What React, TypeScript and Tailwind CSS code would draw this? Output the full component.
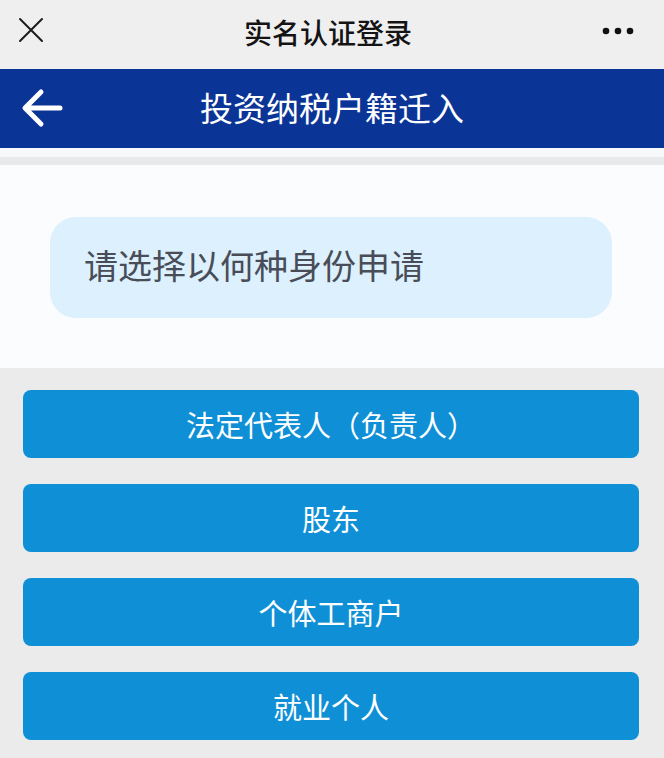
import React from 'react';

const options = ['法定代表人（负责人）', '股东', '个体工商户', '就业个人'];

function CloseIcon() {
  return (
    <svg width="26" height="26" viewBox="0 0 26 26" className="block">
      <path d="M2 2 L24 24 M24 2 L2 24" stroke="#1c1c1c" strokeWidth="2" strokeLinecap="round" fill="none" />
    </svg>
  );
}

function MoreIcon() {
  return (
    <svg width="32" height="8" viewBox="0 0 32 8" className="block">
      <circle cx="4" cy="4" r="3.3" fill="#111" />
      <circle cx="16" cy="4" r="3.3" fill="#111" />
      <circle cx="28" cy="4" r="3.3" fill="#111" />
    </svg>
  );
}

function BackArrow() {
  return (
    <svg width="44" height="40" viewBox="0 0 44 40" className="block">
      <path
        d="M40 20 H6 M21 4 L5 20 L21 36"
        stroke="#ffffff"
        strokeWidth="5"
        strokeLinecap="round"
        strokeLinejoin="round"
        fill="none"
      />
    </svg>
  );
}

export default function App() {
  return (
    <div
      className="w-full min-h-[758px] bg-[#ebebeb]"
      style={{ fontFamily: '"Noto Sans CJK SC", "Noto Sans", sans-serif' }}
    >
      {/* top bar */}
      <div className="relative h-[69px] bg-[#efefef] flex items-center justify-center pr-[8px]">
        <div className="absolute left-[18px] top-[17px]">
          <CloseIcon />
        </div>
        <h1 className="text-[28px] leading-none font-medium text-[#141414] -mt-[6px]">实名认证登录</h1>
        <div className="absolute right-[30px] top-[27px]">
          <MoreIcon />
        </div>
      </div>

      {/* blue header */}
      <div className="relative h-[79px] bg-[#0a3596] flex items-center justify-center">
        <div className="absolute left-[20px] top-[19px]">
          <BackArrow />
        </div>
        <h2 className="text-[33px] leading-none text-white -mt-[3px]">投资纳税户籍迁入</h2>
      </div>

      <div className="h-[9px] bg-[#f7f8f9]" />
      <div className="h-[8px] bg-[#e8e9ea]" />

      {/* prompt section */}
      <div className="bg-[#fbfcfe] pt-[52px] pb-[50px] pl-[50px] pr-[52px]">
        <div className="h-[101px] rounded-[26px] bg-[#dcf0fd] flex items-center pl-[34px]">
          <span className="text-[34px] leading-none text-[#484d57] -mt-[6px]">请选择以何种身份申请</span>
        </div>
      </div>

      {/* options */}
      <div className="pt-[22px] pl-[23px] pr-[25px] flex flex-col gap-[26px]">
        {options.map((label) => (
          <button
            key={label}
            className="h-[68px] w-full rounded-[8px] bg-[#0f8fd6] text-white text-[29px] leading-none flex items-center justify-center"
          >
            {label}
          </button>
        ))}
      </div>
    </div>
  );
}
